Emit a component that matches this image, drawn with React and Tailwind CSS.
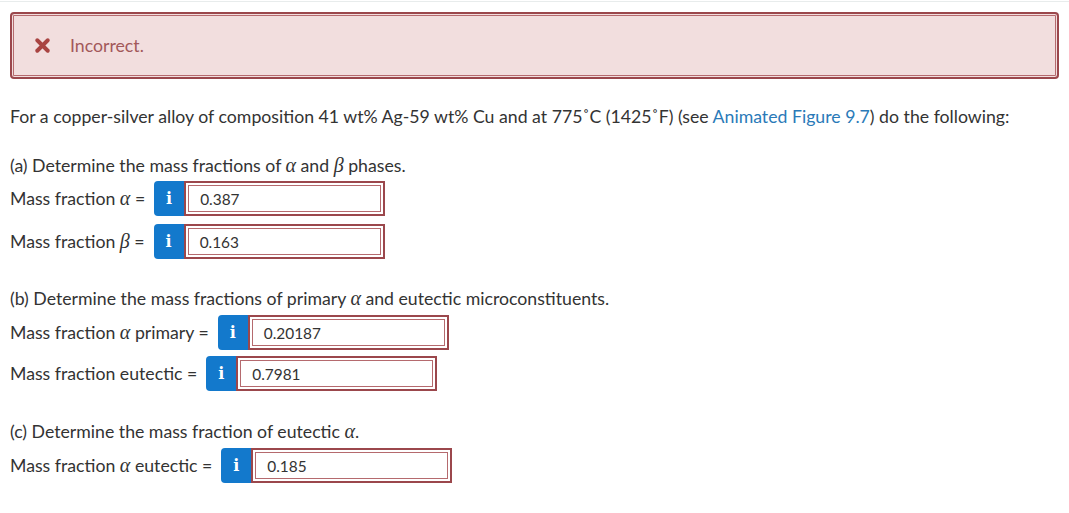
import { X } from "lucide-react";

const font = { fontFamily: "Lato, 'Open Sans', sans-serif" };

function Greek({ children }) {
  return (
    <span className="italic text-[20px] leading-none" style={{ fontFamily: "'Liberation Serif', serif" }}>
      {children}
    </span>
  );
}

function Answer({ label, value, className = "" }) {
  return (
    <div className={`flex items-center ${className}`}>
      <span className="mr-[9px]">{label}</span>
      <div className="flex h-[35px]">
        <span
          className="flex w-[30px] items-center justify-center rounded-l-[4px] bg-[#1379cc] text-[16px] font-bold text-white"
          style={{ fontFamily: "'DejaVu Serif', serif" }}
        >
          i
        </span>
        <div className="flex w-[201px] items-center border-2 border-[#9b474c] bg-white pl-[14px] text-[15.4px] text-[#333] shadow-[inset_0_0_0_2px_#fff,inset_0_0_0_3px_#b56a6e]">
          {value}
        </div>
      </div>
    </div>
  );
}

export default function App() {
  return (
    <div className="min-h-screen bg-white text-[17.7px] leading-6 text-[#333]" style={font}>
      <div className="h-[2px] border-b border-[#e8ecec]" />
      <div className="px-[10px] pt-[10px]">
        <div className="flex h-[67px] items-center rounded-[4px] border-2 border-[#9b474c] bg-[#f2dede] pl-[20px] shadow-[inset_0_0_0_1px_#f2dede,inset_0_0_0_2px_#b56a6e]">
          <X size={21} strokeWidth={4.5} className="text-[#a94442]" />
          <span className="ml-[17px] text-[#a2585a]">Incorrect.</span>
        </div>

        <p className="mt-[26px]">
          For a copper-silver alloy of composition 41 wt% Ag-59 wt% Cu and at 775˚C (1425˚F) (see{" "}
          <span className="text-[#2a7ab8]">Animated Figure 9.7</span>) do the following:
        </p>

        <p className="mt-[25px]">
          (a) Determine the mass fractions of <Greek>α</Greek> and <Greek>β</Greek> phases.
        </p>
        <Answer className="mt-[3px]" label={<>Mass fraction <Greek>α</Greek> =</>} value="0.387" />
        <Answer className="mt-[8px]" label={<>Mass fraction <Greek>β</Greek> =</>} value="0.163" />

        <p className="mt-[28px]">
          (b) Determine the mass fractions of primary <Greek>α</Greek> and eutectic microconstituents.
        </p>
        <Answer className="mt-[4px]" label={<>Mass fraction <Greek>α</Greek> primary =</>} value="0.20187" />
        <Answer className="mt-[6px]" label="Mass fraction eutectic =" value="0.7981" />

        <p className="mt-[29px]">
          (c) Determine the mass fraction of eutectic <Greek>α</Greek>.
        </p>
        <Answer className="mt-[4px]" label={<>Mass fraction <Greek>α</Greek> eutectic =</>} value="0.185" />
      </div>
    </div>
  );
}
